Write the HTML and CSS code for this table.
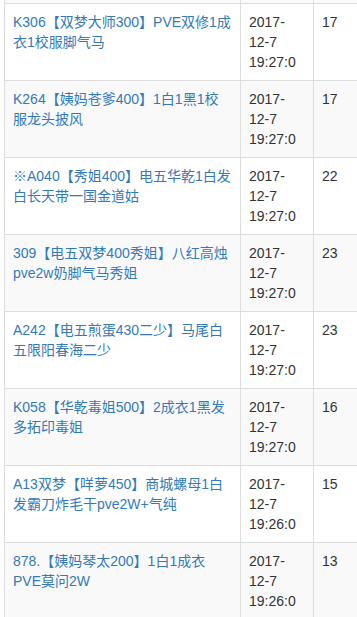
FILE: index.html
```html
<!DOCTYPE html>
<html lang="zh-CN">
<head>
<meta charset="utf-8">
<title>列表</title>
<link rel="stylesheet" href="styles.css">
</head>
<body>
<table class="list">
  <colgroup>
    <col class="c-title">
    <col class="c-date">
    <col class="c-num">
  </colgroup>
  <tbody>
    <tr class="prev"><td></td><td></td><td></td></tr>
    <tr><td><a href="#">K306【双梦大师300】PVE双修1成衣1校服脚气马</a></td><td>2017-12-7 19:27:0</td><td>17</td></tr>
    <tr><td><a href="#">K264【姨妈苍爹400】1白1黑1校服龙头披风</a></td><td>2017-12-7 19:27:0</td><td>17</td></tr>
    <tr><td><a href="#">※A040【秀姐400】电五华乾1白发白长天带一国金道姑</a></td><td>2017-12-7 19:27:0</td><td>22</td></tr>
    <tr><td><a href="#">309【电五双梦400秀姐】八红高烛pve2w奶脚气马秀姐</a></td><td>2017-12-7 19:27:0</td><td>23</td></tr>
    <tr><td><a href="#">A242【电五煎蛋430二少】马尾白五限阳春海二少</a></td><td>2017-12-7 19:27:0</td><td>23</td></tr>
    <tr><td><a href="#">K058【华乾毒姐500】2成衣1黑发多拓印毒姐</a></td><td>2017-12-7 19:27:0</td><td>16</td></tr>
    <tr><td><a href="#">A13双梦【咩萝450】商城螺母1白发霸刀炸毛干pve2W+气纯</a></td><td>2017-12-7 19:26:0</td><td>15</td></tr>
    <tr><td><a href="#">878.【姨妈琴太200】1白1成衣PVE莫问2W</a></td><td>2017-12-7 19:26:0</td><td>13</td></tr>
  </tbody>
</table>
</body>
</html>
```

FILE: styles.css
```css
html, body {
  margin: 0;
  padding: 0;
  background: #fff;
}
body {
  font-family: "Liberation Sans", Arial, "Noto Sans CJK SC", sans-serif;
  font-size: 14px;
  line-height: 20px;
  color: #333;
  overflow: hidden;
}
.list {
  margin-left: 4px;
  border-collapse: collapse;
  border-spacing: 0;
  table-layout: fixed;
  width: 353px;
}
.c-title { width: 236px; }
.c-date { width: 73px; }
.c-num { width: 44px; }
.list td {
  border: 1px solid #ddd;
  padding: 8px;
  vertical-align: top;
  text-align: left;
  word-wrap: break-word;
}
.list tbody tr:nth-of-type(odd) {
  background: #f9f9f9;
}
.list tr.prev td {
  padding: 0;
  height: 3px;
  border-top: none;
}
.list a {
  color: #337ab7;
  text-decoration: none;
}
```
